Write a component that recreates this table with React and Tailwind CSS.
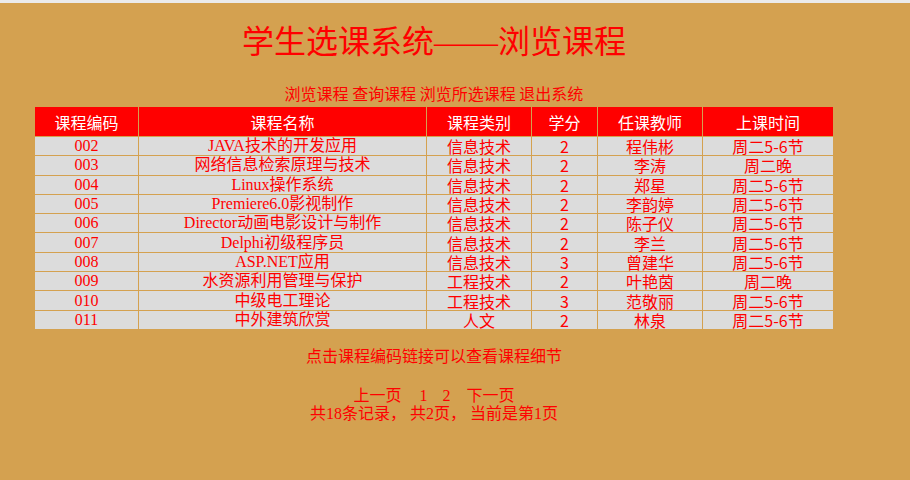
import React from "react";

const rows = [
  ["002", "JAVA技术的开发应用", "信息技术", "2", "程伟彬", "周二5-6节"],
  ["003", "网络信息检索原理与技术", "信息技术", "2", "李涛", "周二晚"],
  ["004", "Linux操作系统", "信息技术", "2", "郑星", "周二5-6节"],
  ["005", "Premiere6.0影视制作", "信息技术", "2", "李韵婷", "周二5-6节"],
  ["006", "Director动画电影设计与制作", "信息技术", "2", "陈子仪", "周二5-6节"],
  ["007", "Delphi初级程序员", "信息技术", "2", "李兰", "周二5-6节"],
  ["008", "ASP.NET应用", "信息技术", "3", "曾建华", "周二5-6节"],
  ["009", "水资源利用管理与保护", "工程技术", "2", "叶艳茵", "周二晚"],
  ["010", "中级电工理论", "工程技术", "3", "范敬丽", "周二5-6节"],
  ["011", "中外建筑欣赏", "人文", "2", "林泉", "周二5-6节"],
];

const headers = ["课程编码", "课程名称", "课程类别", "学分", "任课教师", "上课时间"];

const serif = "font-['Liberation_Serif','Noto_Sans_CJK_SC',serif]";
const sans = "font-['Noto_Sans_CJK_SC',sans-serif]";

export default function App() {
  return (
    <div className="w-[910px] h-[480px] bg-[#d4a150] border-t-[3px] border-[#ebebeb] overflow-hidden">
      <div className="w-[868px] flex flex-col items-center text-[#ff0000]">
        <h1 className={`mt-[19px] text-[32px] leading-[40px] ${serif}`}>学生选课系统——浏览课程</h1>
        <div className={`mt-[21px] text-[16px] leading-[20px] ${sans}`}>
          浏览课程 查询课程 浏览所选课程 退出系统
        </div>
        <div className="mt-[4px] w-[798px] grid grid-cols-[103px_287px_104px_65px_104px_130px] gap-px">
          {headers.map((h) => (
            <div key={h} className={`h-[29px] bg-[#ff0000] text-white text-[16px] flex items-center justify-center ${sans}`}>
              {h}
            </div>
          ))}
          {rows.map((r) =>
            r.map((c, i) => (
              <div
                key={r[0] + i}
                className={`h-[18.3px] bg-[#dcdcdc] text-[16px] leading-[18px] flex items-center justify-center whitespace-nowrap overflow-visible ${i < 2 ? serif : sans}`}
              >
                {c}
              </div>
            ))
          )}
        </div>
        <div className={`mt-[16px] text-[16px] leading-[20px] ${sans}`}>点击课程编码链接可以查看课程细节</div>
        <div className={`mt-[22px] text-[16px] leading-[18px] ${serif} flex`}>
          <span>上一页</span>
          <span className="ml-[18px]">1</span>
          <span className="ml-[15px]">2</span>
          <span className="ml-[16px]">下一页</span>
        </div>
        <div className={`text-[16px] leading-[18px] ${serif} whitespace-pre`}>共18条记录， 共2页， 当前是第1页</div>
      </div>
    </div>
  );
}
